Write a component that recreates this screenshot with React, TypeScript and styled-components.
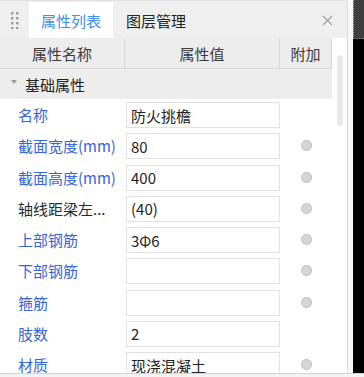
import React from 'react'
import styled, { createGlobalStyle } from 'styled-components'

const GlobalStyle = createGlobalStyle`
  html, body {
    margin: 0;
    padding: 0;
    background: #f3f3f3;
    font-family: "Noto Sans CJK SC", "Noto Sans", sans-serif;
  }
`

const Screen = styled.div`
  width: 364px;
  height: 377px;
  display: flex;
  flex-direction: column;
  overflow: hidden;
`

const Workspace = styled.div`
  display: flex;
  height: 373px;
  border-bottom: 1px solid #d4d4d4;
`

const Panel = styled.div`
  width: 347px;
  display: flex;
  flex-direction: column;
  border-right: 1px solid #dcdcdc;
  border-top: 1px solid #e2e2e2;
  background: #ffffff;
  overflow: hidden;
`

const Gutter = styled.div`
  width: 5px;
  background: #f7f7f7;
`

const Strip = styled.div`
  flex: 1;
  background: #000;
  display: flex;
  flex-direction: column;
`

const StripTop = styled.div`
  height: 38px;
  background: #3e3e3e;
  border-left: 1px dotted #bbb;
  border-bottom: 1px dotted #888;
`

const TabBar = styled.div`
  height: 36px;
  display: flex;
  align-items: stretch;
  background: #efefef;
  padding-top: 1px;
  flex-shrink: 0;
`

const Grip = styled.div`
  width: 29px;
  display: flex;
  align-items: center;
  justify-content: center;
`

const Tab = styled.div<{ active?: boolean }>`
  width: ${({ active }) => (active ? '84px' : 'auto')};
  padding: ${({ active }) => (active ? '0' : '0 0 0 13px')};
  display: flex;
  align-items: center;
  justify-content: center;
  background: ${({ active }) => (active ? '#ffffff' : 'transparent')};
  color: ${({ active }) => (active ? '#3f8cf4' : '#222')};
  font-size: 15px;
`

const CloseButton = styled.div`
  margin-left: auto;
  width: 36px;
  display: flex;
  align-items: center;
  justify-content: center;
  padding-right: 2px;
`

const Body = styled.div`
  flex: 1;
  display: flex;
  min-height: 0;
`

const Table = styled.div`
  width: 332px;
  display: flex;
  flex-direction: column;
`

const HeaderRow = styled.div`
  height: 30px;
  display: grid;
  grid-template-columns: 125px 155px 52px;
  background: #ececec;
  border-bottom: 1px solid #dadada;
  flex-shrink: 0;
`

const HeaderCell = styled.div`
  display: flex;
  align-items: center;
  justify-content: center;
  font-size: 15px;
  color: #3a3a3a;
  border-right: 1px solid #d6d6d6;
`

const GroupRow = styled.div`
  height: 30px;
  display: flex;
  align-items: center;
  gap: 8px;
  padding-left: 11px;
  background: #ededed;
  font-size: 15px;
  color: #222;
  flex-shrink: 0;
`

const Caret = styled.span`
  width: 0;
  height: 0;
  border-left: 3px solid transparent;
  border-right: 3px solid transparent;
  border-top: 4px solid #999;
  margin-top: -4px;
`

const Row = styled.div`
  height: 31.25px;
  display: grid;
  grid-template-columns: 126px 154px 52px;
  align-items: center;
  flex-shrink: 0;
`

const Label = styled.div<{ plain?: boolean }>`
  padding-left: 18px;
  font-size: 15px;
  color: ${({ plain }) => (plain ? '#2a2a2a' : '#3563dc')};
  white-space: nowrap;
`

const ValueBox = styled.div`
  height: 26px;
  box-sizing: border-box;
  border: 1px solid #e2e2e2;
  display: flex;
  align-items: center;
  padding-left: 4px;
  font-size: 15px;
  color: #222;
  white-space: nowrap;
  overflow: hidden;
  margin-top: 1px;
`

const Extra = styled.div`
  display: flex;
  justify-content: center;
  padding-left: 1px;
`

const Dot = styled.span`
  width: 9px;
  height: 9px;
  border-radius: 50%;
  background: #d6d6d6;
  border: 1px solid #bdbdbd;
`

const ScrollTrack = styled.div`
  flex: 1;
  display: flex;
  justify-content: center;
  padding-top: 17px;
  padding-left: 1px;
`

const ScrollThumb = styled.div`
  width: 6px;
  height: 71px;
  border-radius: 3px;
  background: #e9e9e9;
`

const GripIcon = () => (
  <svg width="8" height="17" viewBox="0 0 8 17">
    {[0, 1, 2, 3].map((r) =>
      [0, 1].map((c) => (
        <rect key={`${r}-${c}`} x={c * 5} y={r * 5} width="2.4" height="2.4" fill="#9a9a9a" />
      ))
    )}
  </svg>
)

const CloseIcon = () => (
  <svg width="11" height="11" viewBox="0 0 11 11">
    <path d="M1 1 L10 10 M10 1 L1 10" stroke="#a0a0a0" strokeWidth="1.3" />
  </svg>
)

interface Property {
  label: string
  value: string
  plain?: boolean
  extra?: boolean
}

const properties: Property[] = [
  { label: '名称', value: '防火挑檐' },
  { label: '截面宽度(mm)', value: '80', extra: true },
  { label: '截面高度(mm)', value: '400', extra: true },
  { label: '轴线距梁左...', value: '(40)', plain: true, extra: true },
  { label: '上部钢筋', value: '3Φ6', extra: true },
  { label: '下部钢筋', value: '', extra: true },
  { label: '箍筋', value: '', extra: true },
  { label: '肢数', value: '2' },
  { label: '材质', value: '现浇混凝土', extra: true },
]

export default function App() {
  return (
    <Screen>
      <GlobalStyle />
      <Workspace>
        <Panel>
          <TabBar>
            <Grip>
              <GripIcon />
            </Grip>
            <Tab active>属性列表</Tab>
            <Tab>图层管理</Tab>
            <CloseButton>
              <CloseIcon />
            </CloseButton>
          </TabBar>
          <Body>
            <Table>
              <HeaderRow>
                <HeaderCell>属性名称</HeaderCell>
                <HeaderCell>属性值</HeaderCell>
                <HeaderCell>附加</HeaderCell>
              </HeaderRow>
              <GroupRow>
                <Caret />
                基础属性
              </GroupRow>
              {properties.map((p) => (
                <Row key={p.label}>
                  <Label plain={p.plain}>{p.label}</Label>
                  <ValueBox>{p.value}</ValueBox>
                  <Extra>{p.extra && <Dot />}</Extra>
                </Row>
              ))}
            </Table>
            <ScrollTrack>
              <ScrollThumb />
            </ScrollTrack>
          </Body>
        </Panel>
        <Gutter />
        <Strip>
          <StripTop />
        </Strip>
      </Workspace>
    </Screen>
  )
}
